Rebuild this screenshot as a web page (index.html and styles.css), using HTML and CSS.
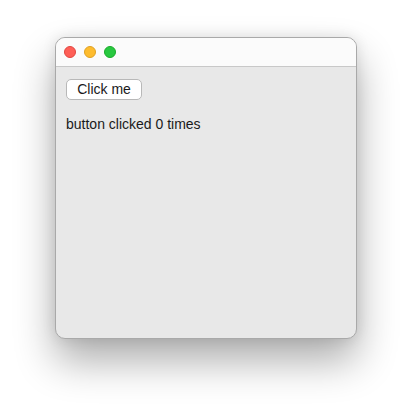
FILE: index.html
```html
<!DOCTYPE html>
<html>
<head>
<meta charset="utf-8">
<link rel="stylesheet" href="styles.css">
</head>
<body>
<div class="stage">
  <div class="window">
    <div class="titlebar">
      <span class="light red"></span>
      <span class="light yellow"></span>
      <span class="light green"></span>
    </div>
    <div class="content">
      <button class="btn">Click me</button>
      <p class="label">button clicked 0 times</p>
    </div>
  </div>
</div>
</body>
</html>
```
FILE: styles.css
```css
html, body {
  margin: 0;
  padding: 0;
  background: #ffffff;
}
.stage {
  width: 412px;
  height: 412px;
  padding: 37px 0 0 55px;
  box-sizing: border-box;
}
.window {
  width: 302px;
  height: 302px;
  box-sizing: border-box;
  border-radius: 10px;
  border: 1px solid #a9a9a9;
  background: #e8e8e8;
  overflow: hidden;
  box-shadow: 0 22px 40px rgba(0,0,0,0.32), 0 0 14px rgba(0,0,0,0.10);
  font-family: "Liberation Sans", Arial, sans-serif;
}
.titlebar {
  height: 29px;
  box-sizing: border-box;
  background: #fbfbfb;
  border-bottom: 1px solid #c8c8c8;
  display: flex;
  align-items: center;
  gap: 8px;
  padding: 0 0 1px 8px;
}
.light {
  width: 12px;
  height: 12px;
  border-radius: 50%;
  box-sizing: border-box;
}
.red { background: #fe5f57; border: 0.5px solid #e14640; }
.yellow { background: #febc2e; border: 0.5px solid #dfa123; }
.green { background: #28c840; border: 0.5px solid #1aab29; }
.content {
  padding: 12px 10px;
}
.btn {
  display: block;
  width: 76px;
  height: 21px;
  margin: 0;
  padding: 0;
  box-sizing: border-box;
  background: #ffffff;
  border: 1px solid #b8b8b8;
  border-radius: 5px;
  font-family: "Liberation Sans", Arial, sans-serif;
  font-size: 14px;
  color: #1a1a1a;
  line-height: 19px;
}
.label {
  margin: 16px 0 0 0;
  font-size: 14px;
  line-height: 17px;
  color: #1a1a1a;
}
```
